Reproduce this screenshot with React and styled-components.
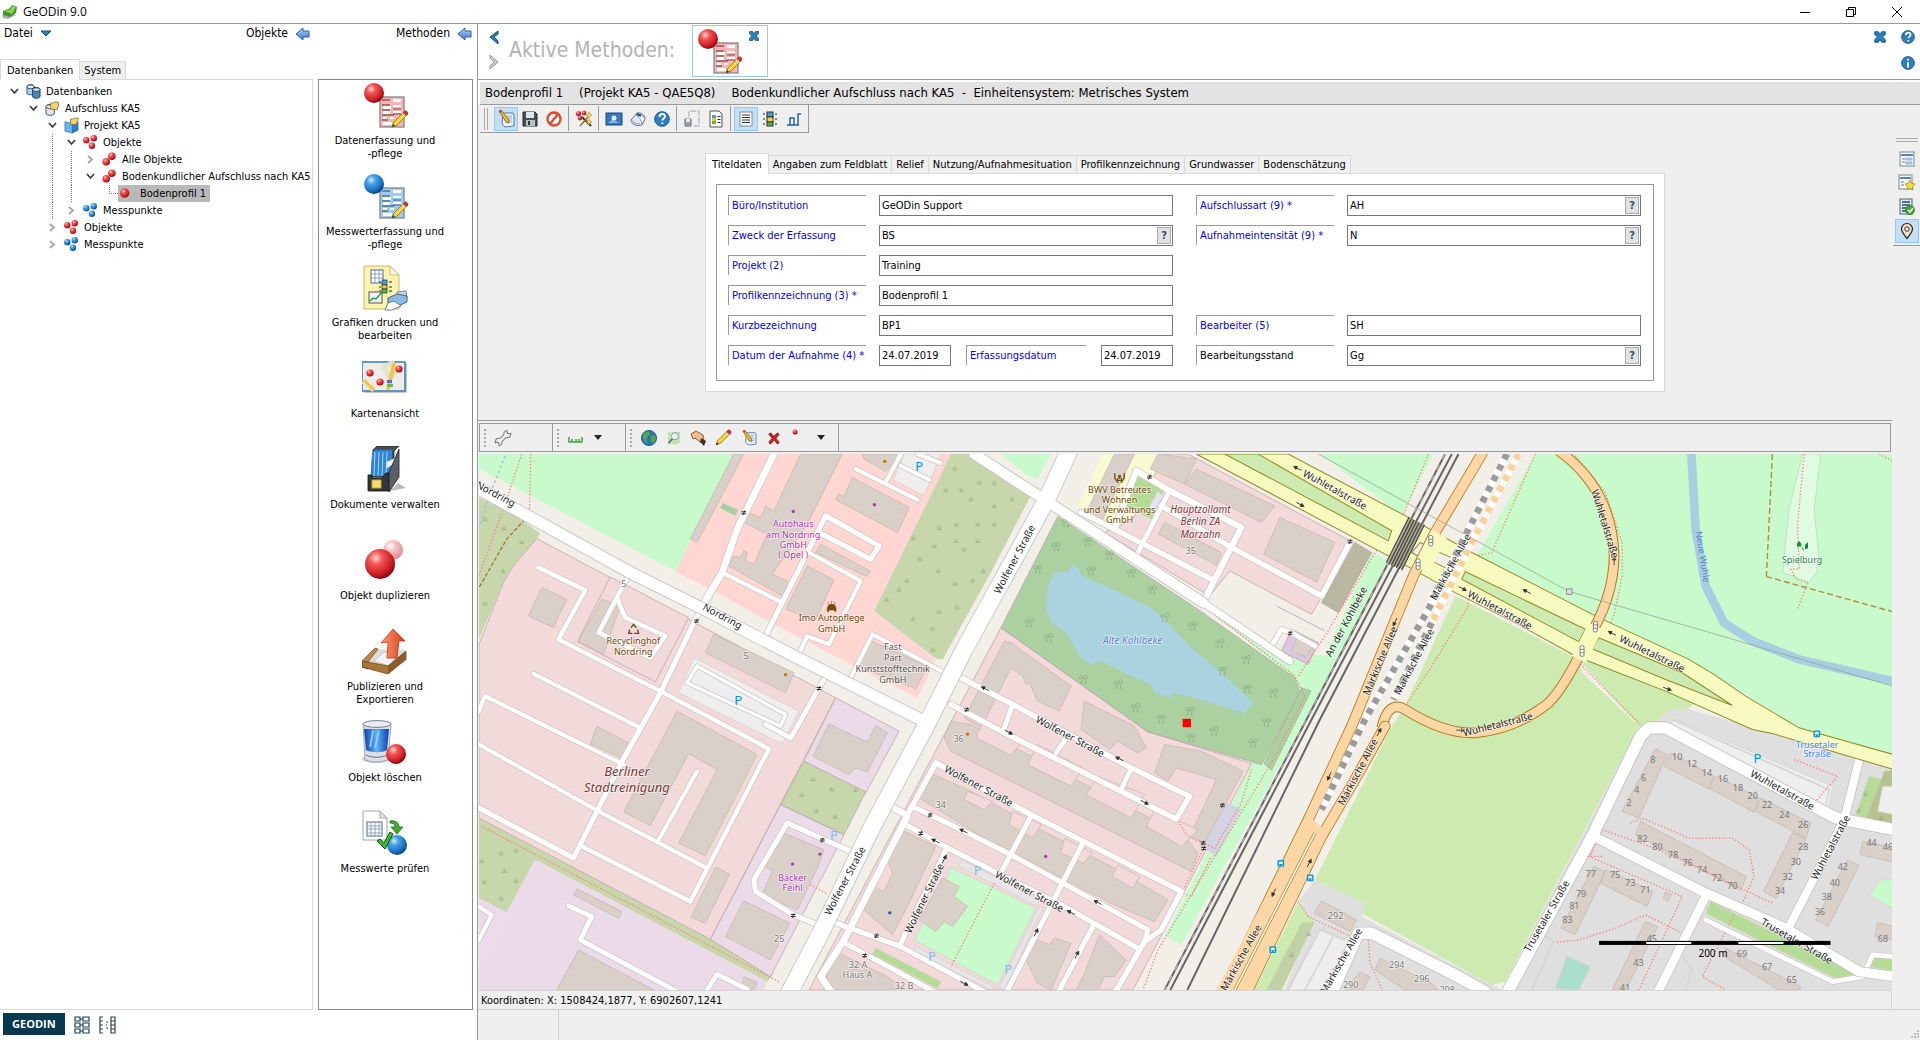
import React from 'react';
import styled, { createGlobalStyle } from 'styled-components';

const GlobalStyle = createGlobalStyle`
  * {
    box-sizing: border-box;
  }

  body {
    margin: 0;
    background: #fff;
    color: #000;
    font-family: Tahoma, 'DejaVu Sans Condensed', 'Noto Sans', sans-serif;
    font-size: 11px;
    line-height: 13px;
  }

  button, input {
    font: inherit;
    color: inherit;
    margin: 0;
    padding: 0;
  }

  button {
    border: 0;
    background: none;
  }

  svg {
    display: block;
    flex: none;
  }
`;

/* ---------- data ---------- */

const tree = [
  { label: 'Datenbanken', depth: 0, open: true, icon: 'databases' },
  { label: 'Aufschluss KA5', depth: 1, open: true, icon: 'database' },
  { label: 'Projekt KA5', depth: 2, open: true, icon: 'project' },
  { label: 'Objekte', depth: 3, open: true, icon: 'redThree' },
  { label: 'Alle Objekte', depth: 4, open: false, icon: 'redTwo' },
  { label: 'Bodenkundlicher Aufschluss nach KA5', depth: 4, open: true, icon: 'redTwo' },
  { label: 'Bodenprofil 1', depth: 5, leaf: true, icon: 'redOne' },
  { label: 'Messpunkte', depth: 3, open: false, icon: 'blueThree' },
  { label: 'Objekte', depth: 2, open: false, icon: 'redThree' },
  { label: 'Messpunkte', depth: 2, open: false, icon: 'blueThree' },
];

const methods = [
  { icon: 'formRed', lines: ['Datenerfassung und', '-pflege'] },
  { icon: 'formBlue', lines: ['Messwerterfassung und', '-pflege'] },
  { icon: 'print', lines: ['Grafiken drucken und', 'bearbeiten'] },
  { icon: 'map', lines: ['Kartenansicht'] },
  { icon: 'binder', lines: ['Dokumente verwalten'] },
  { icon: 'duplicate', lines: ['Objekt duplizieren'] },
  { icon: 'publish', lines: ['Publizieren und', 'Exportieren'] },
  { icon: 'trash', lines: ['Objekt löschen'] },
  { icon: 'check', lines: ['Messwerte prüfen'] },
];

const formTabs = [
  'Titeldaten',
  'Angaben zum Feldblatt',
  'Relief',
  'Nutzung/Aufnahmesituation',
  'Profilkennzeichnung',
  'Grundwasser',
  'Bodenschätzung',
];

const leftFields = [
  { id: 'buero', label: 'Büro/Institution', value: 'GeODin Support' },
  { id: 'zweck', label: 'Zweck der Erfassung', value: 'BS', help: true },
  { id: 'projekt', label: 'Projekt (2)', value: 'Training' },
  { id: 'profil', label: 'Profilkennzeichnung (3) *', value: 'Bodenprofil 1' },
  { id: 'kurz', label: 'Kurzbezeichnung', value: 'BP1' },
];

const rightFields = [
  { id: 'art', label: 'Aufschlussart (9) *', value: 'AH', help: true },
  { id: 'intensitaet', label: 'Aufnahmeintensität (9) *', value: 'N', help: true },
  null,
  null,
  { id: 'bearbeiter', label: 'Bearbeiter (5)', value: 'SH' },
];

/* ---------- icons ---------- */

const Gradients = () => (
  <HiddenSvg width="0" height="0" aria-hidden="true">
    <defs>
      <radialGradient id="ballRed" cx="0.36" cy="0.3" r="0.7">
        <stop offset="0" stopColor="#ffd9d4" />
        <stop offset="0.3" stopColor="#ef5a58" />
        <stop offset="0.75" stopColor="#d31f26" />
        <stop offset="1" stopColor="#8e0b12" />
      </radialGradient>
      <radialGradient id="ballBlue" cx="0.36" cy="0.3" r="0.7">
        <stop offset="0" stopColor="#d5ecff" />
        <stop offset="0.3" stopColor="#4aa3e8" />
        <stop offset="0.75" stopColor="#1b74c4" />
        <stop offset="1" stopColor="#0b4583" />
      </radialGradient>
      <radialGradient id="ballPale" cx="0.36" cy="0.3" r="0.7">
        <stop offset="0" stopColor="#fff" />
        <stop offset="0.4" stopColor="#f6bfc0" />
        <stop offset="1" stopColor="#e48e92" />
      </radialGradient>
      <linearGradient id="glass" x1="0" x2="1">
        <stop offset="0" stopColor="#0a3fb4" />
        <stop offset="0.5" stopColor="#5fb3ff" />
        <stop offset="1" stopColor="#0b3fae" />
      </linearGradient>
      <linearGradient id="arrowBlue" x1="0" x2="0" y1="0" y2="1">
        <stop offset="0" stopColor="#b5d6fb" />
        <stop offset="1" stopColor="#2f72d2" />
      </linearGradient>
      <linearGradient id="arrowRed" x1="0" x2="1">
        <stop offset="0" stopColor="#ff9c78" />
        <stop offset="1" stopColor="#d83b16" />
      </linearGradient>
    </defs>
  </HiddenSvg>
);

const Ball = ({ x, y, r, tone = 'Red' }) => (
  <circle cx={x} cy={y} r={r} fill={`url(#ball${tone})`} />
);

const Pencil = ({ x = 0, y = 0, s = 1 }) => (
  <g transform={`translate(${x} ${y}) scale(${s})`}>
    <path d="M0 16l2-5L11 2l3 3-9 9z" fill="#f6d63a" stroke="#8a6a10" strokeWidth="0.8" />
    <path d="M11 2l2-2c1-1 4 2 3 3l-2 2z" fill="#d8322c" stroke="#8d1a16" strokeWidth="0.6" />
    <path d="M10 3l3 3 1-1-3-3z" fill="#ddd" />
    <path d="M0 16l1-3 2 2z" fill="#333" />
  </g>
);

const FormSheet = ({ fill, line }) => (
  <g>
    <rect x="18" y="15" width="24" height="30" fill={fill} stroke="#8d8d8d" strokeWidth="1.4" />
    <path d="M20 18h8M20 23h8M20 28h8M20 33h12M20 38h6" stroke={line} strokeWidth="1" />
    <path d="M31 17h8v3h-8zM21 24h8v3h-8zM31 23h8v2h-8zM21 29h7v3h-7zM31 29h8v2h-8zM21 35h4v2h-4zM28 35h4v2h-4zM21 40h9v3h-9z" fill="#fff" />
    <path d="M31 27h8M31 32h8" stroke={line} strokeWidth="0.8" />
  </g>
);

const methodDrawings = {
  formRed: (
    <>
      <FormSheet fill="#f5b5b2" line="#5d2b2b" />
      <Ball x={12} y={11} r={10} />
      <Pencil x={30} y={29} />
    </>
  ),
  formBlue: (
    <>
      <FormSheet fill="#9fcdf0" line="#23425e" />
      <Ball x={12} y={11} r={10} tone="Blue" />
      <Pencil x={30} y={29} />
    </>
  ),
  print: (
    <>
      <path d="M2 2h26l9 9v34H2z" fill="#fbf3ae" stroke="#c8b96a" />
      <path d="M28 2v9h9z" fill="#fffbe0" stroke="#c8b96a" />
      <rect x="9" y="6" width="12" height="13" fill="#fff" stroke="#4b6b96" />
      <path d="M13 6v13M17 6v13M9 10h12M9 14h12" stroke="#6f8db5" strokeWidth="0.8" />
      <rect x="20" y="16" width="5" height="5" fill="#3ea0e0" stroke="#333" strokeWidth="0.7" />
      <rect x="20" y="21" width="5" height="4" fill="#f6c62f" stroke="#333" strokeWidth="0.7" />
      <rect x="20" y="25" width="5" height="4" fill="#4fc04c" stroke="#333" strokeWidth="0.7" />
      <path d="M17 18h2M17 23h2M17 27h2M27 18h3M27 23h3M27 27h3" stroke="#222" />
      <rect x="7" y="28" width="13" height="11" fill="#eef1f8" stroke="#555" />
      <path d="M8 37l3-3 3 1 6-7" fill="none" stroke="#2ba12e" strokeWidth="1.5" />
      <path d="M35 28l9-1 1 7-10 1z" fill="#ccd5e0" stroke="#7b8797" />
      <path d="M26 34l9-4 10 2v6l-9 4-10-3z" fill="#8ab9e4" stroke="#47658a" />
      <path d="M26 39l6-2 7 5-9 4h-7z" fill="#fff" stroke="#6c7787" />
    </>
  ),
  map: (
    <>
      <rect x="2" y="9" width="43" height="29" fill="#c9c9c9" />
      <rect x="0" y="7" width="43" height="29" fill="#eeece4" stroke="#3b86bd" strokeWidth="1.6" />
      <path d="M1 26l11 9M22 12l8-4 4 8-6 7z" fill="none" stroke="#dfe4cf" strokeWidth="5" />
      <path d="M2 25l10 10" stroke="#f3c34b" strokeWidth="3" />
      <path d="M32 8l-3 14-3 13" fill="none" stroke="#f3c34b" strokeWidth="4" />
      <rect x="25" y="25" width="5" height="3" fill="#5a68c8" />
      <rect x="25" y="29" width="6" height="3" fill="#68b64e" />
      <Ball x={8} y={18} r={3.6} />
      <Ball x={18} y={27} r={3.6} />
      <Ball x={37} y={14} r={3.6} />
    </>
  ),
  binder: (
    <>
      <path d="M28 45l16-3-8-5z" fill="#bbb" />
      <path d="M11 4l4-4h22l-5 5v26H9z" fill="#4a4e55" stroke="#22252a" strokeWidth="0.8" />
      <path d="M10 7l3-3h17v22l-4 4H9z" fill="#2c86d3" />
      <path d="M13 6l-1 24M17 6l-1 24M21 6l-1 24M25 6l-1 24" stroke="#a5d3f8" />
      <path d="M24 16l9-4v5l-9 6z" fill="#e9f0f6" stroke="#88a" strokeWidth="0.5" />
      <path d="M25 31l4-9 8-19v28l-10 15z" fill="#5b6067" stroke="#1d1f23" strokeWidth="0.8" />
      <path d="M6 29h4v3h10l4-5h3v18H6z" fill="#33373d" stroke="#111" strokeWidth="0.8" />
      <rect x="10" y="34" width="9" height="8" fill="#f5dd6c" stroke="#c5a92f" />
    </>
  ),
  duplicate: (
    <>
      <Ball x={31} y={13} r={10} tone="Pale" />
      <Ball x={18} y={27} r={15} />
    </>
  ),
  publish: (
    <>
      <path d="M25 46l20-14-3-4z" fill="#bbb" />
      <path d="M1 34L12 21l32 1-17 23z" fill="#ddd" />
      <path d="M12 33l10-9 14 2-9 12z" fill="#f2f2f2" stroke="#a7a7a7" strokeWidth="0.6" />
      <path d="M0 33L13 20l3 1L6 34v7l-6-2z" fill="#b98a4c" stroke="#70491b" strokeWidth="0.7" />
      <path d="M6 34l20 4 18-15v8L26 46 0 39v-6z" fill="#a87637" stroke="#5f3d14" strokeWidth="0.7" />
      <path d="M26 38v8l18-15v-8z" fill="#8b5c27" />
      <path d="M19 15L31 1l12 12h-6l-2 17H25l1-16z" fill="url(#arrowRed)" stroke="#a72c0d" strokeWidth="0.7" />
    </>
  ),
  trash: (
    <>
      <ellipse cx="14" cy="40" rx="14" ry="4" fill="#c9c9c9" />
      <path d="M1 5l2 35c4 4 19 4 23 0l3-35z" fill="#dcdfe3" stroke="#8f959c" strokeWidth="0.8" />
      <path d="M2 10l2 21c5 3 17 3 21 0l2-21z" fill="url(#glass)" />
      <path d="M11 12l-3 16M17 12l-4 17" stroke="#a5d5ff" strokeWidth="1.5" />
      <ellipse cx="15" cy="5" rx="14" ry="3.4" fill="#e9edf1" stroke="#7b8188" />
      <path d="M4 36c6 3 16 3 21 0" stroke="#6d737a" fill="none" />
      <Ball x={34} y={35} r={10} />
    </>
  ),
  check: (
    <>
      <path d="M1 1h17l7 7v22H1z" fill="#fff" stroke="#a3a3a3" />
      <path d="M18 1v7h7z" fill="#e5e5e5" stroke="#a3a3a3" />
      <rect x="5" y="12" width="15" height="14" fill="#fff" stroke="#51698f" />
      <path d="M9 12v14M13 12v14M17 12v14M5 16h15M5 19h15M5 23h15" stroke="#7f95b8" strokeWidth="0.8" />
      <path d="M28 11c6-1 9 2 9 6h4l-6 7-6-7h4c0-3-2-4-5-4z" fill="#3fae33" stroke="#1d6b18" strokeWidth="0.8" />
      <Ball x={35} y={35} r={10} tone="Blue" />
      <path d="M15 31l3-2 4 4 6-11 3 2-8 15z" fill="#45b535" stroke="#14520f" />
    </>
  ),
};

const MethodIcon = ({ name }) => (
  <svg width="46" height="48" viewBox="0 0 46 48" aria-hidden="true">{methodDrawings[name]}</svg>
);

const smallDrawings = {
  databases: (
    <>
      <path d="M1 3c0-3 8-3 8 0v7c0 2-8 2-8 0z" fill="#a9cdec" stroke="#1a2e42" strokeWidth="0.8" />
      <ellipse cx="5" cy="3" rx="4" ry="2" fill="#e4f1fc" stroke="#1a2e42" strokeWidth="0.8" />
      <path d="M7 6c0-3 8-3 8 0v7c0 3-8 3-8 0z" fill="#4a86bd" stroke="#10202f" strokeWidth="0.8" />
      <ellipse cx="11" cy="6" rx="4" ry="2" fill="#cfe4f7" stroke="#10202f" strokeWidth="0.8" />
    </>
  ),
  database: (
    <>
      <path d="M1 6c0-3 9-3 9 0v7c0 3-9 3-9 0z" fill="#d5e6f5" stroke="#1a2733" strokeWidth="0.8" />
      <ellipse cx="5.5" cy="6" rx="4.5" ry="2" fill="#f0f7fd" stroke="#1a2733" strokeWidth="0.8" />
      <path d="M6 2h3l1-1h4v2h1l-2 6H6z" fill="#f0cf7b" stroke="#8b6a1c" strokeWidth="0.8" />
    </>
  ),
  project: (
    <>
      <path d="M1 4l8 2v10l-8-2z" fill="#69b4ee" stroke="#1f67a8" strokeWidth="0.7" />
      <path d="M9 6l6-2v9l-6 3z" fill="#2c7fc7" stroke="#1f67a8" strokeWidth="0.7" />
      <path d="M7 1h3l1-1h4v2l-2 5H7z" fill="#f0cf7b" stroke="#8b6a1c" strokeWidth="0.8" />
    </>
  ),
  redThree: (<><Ball x={3.5} y={5.5} r={3.4} /><Ball x={11.5} y={3.5} r={3.4} /><Ball x={9.5} y={11.5} r={3.4} /></>),
  blueThree: (<><Ball x={3.5} y={5.5} r={3.4} tone="Blue" /><Ball x={11.5} y={3.5} r={3.4} tone="Blue" /><Ball x={9.5} y={11.5} r={3.4} tone="Blue" /></>),
  redTwo: (<><Ball x={10.5} y={4.5} r={4} /><Ball x={4.5} y={10.5} r={4} /></>),
  redOne: <Ball x={5} y={7.5} r={5} />,
  note: (
    <>
      <path d="M5 2h10l1 2v11l-9 1-3-3z" fill="#e9f0f7" stroke="#56789b" />
      <path d="M8 5h6M8 7h6M8 9h6M8 11h6" stroke="#86a6c6" strokeWidth="0.8" />
      <path d="M1 0l2-1 8 10v3l-3-1z" fill="#f3bc38" stroke="#7e5510" strokeWidth="0.8" />
      <path d="M1 0l2-1 1 2-2 1z" fill="#d23c32" />
    </>
  ),
  save: (
    <>
      <path d="M1 1h12l2 2v12H1z" fill="#4a4f57" stroke="#25282d" />
      <rect x="4" y="1" width="8" height="6" fill="#dfe6ee" />
      <rect x="4" y="9" width="9" height="6" fill="#b9c0c8" />
      <rect x="6" y="10" width="2" height="4" fill="#333" />
    </>
  ),
  forbid: (
    <>
      <circle cx="8" cy="8" r="6.5" fill="#fff" stroke="#e0492c" strokeWidth="2.3" />
      <path d="M12 3L4 13" stroke="#e0492c" strokeWidth="2.3" />
    </>
  ),
  wand: (
    <>
      <path d="M15 15L6 6" stroke="#38342e" strokeWidth="2" />
      <path d="M4 15L12 6" stroke="#9b6b30" strokeWidth="1.6" />
      <Ball x={2.5} y={2.5} r={2.6} />
      <Ball x={8} y={2} r={2.4} />
      <Ball x={4} y={7} r={2.4} />
      <path d="M13 1l1 2 2 1-2 1-1 2-1-2-2-1 2-1zM13 8l1 2 2 1-2 1-1 2-1-2-2-1 2-1z" fill="#f7dc3c" stroke="#9e850e" strokeWidth="0.5" />
    </>
  ),
  picture: (
    <>
      <rect x="0" y="2" width="16" height="12" fill="#3775bd" stroke="#1b4a85" />
      <path d="M2 12l5-4 6 4z" fill="#80b3e6" />
      <circle cx="8" cy="7" r="2.5" fill="#e4effb" />
    </>
  ),
  paint: (
    <>
      <path d="M1 9l6-7c4-1 8 2 8 6l-3 6c-6 2-11-1-11-5z" fill="#dfe8f2" stroke="#6b7785" />
      <path d="M6 4l5-1 4 5-3 5c-1-5-3-7-6-9z" fill="#fff" stroke="#6b7785" strokeWidth="0.8" />
      <path d="M7 3l4 2" stroke="#1c4f91" strokeWidth="2" />
      <path d="M2 10c2 2 5 3 8 3" stroke="#8b96a3" fill="none" />
    </>
  ),
  help: (
    <>
      <circle cx="8" cy="8" r="7.3" fill="#2c7fbe" stroke="#1a568a" />
      <path d="M5.5 6c0-4 5.5-4 5.5-.5 0 2-2.7 2-2.7 4M8.300 11.500v1.600" fill="none" stroke="#fff" strokeWidth="1.9" />
    </>
  ),
  info: (
    <>
      <circle cx="8" cy="8" r="7.3" fill="#2c7fbe" stroke="#1a568a" />
      <path d="M8 3v2M8 7v6" stroke="#fff" strokeWidth="2.2" />
    </>
  ),
  tray: (
    <>
      <path d="M5 6V0h10v15H9" fill="none" stroke="#a5a5a5" strokeDasharray="6 1.500" />
      <path d="M1 8h6v7H1z" fill="#9ba0a7" stroke="#6f747b" />
      <rect x="2" y="8" width="4" height="3" fill="#eee" />
    </>
  ),
  report: (
    <>
      <path d="M2 0h9l3 3v13H2z" fill="#fff" stroke="#555" />
      <rect x="4" y="4" width="4" height="3" fill="#3d9ae0" />
      <rect x="4" y="7" width="4" height="3" fill="#f3c42e" />
      <rect x="4" y="10" width="4" height="3" fill="#54b947" />
      <path d="M9.5 5.5h3M9.5 8.5h3M9.5 11.5h3" stroke="#222" />
    </>
  ),
  list: (
    <>
      <rect x="2" y="1" width="12" height="14" fill="#fff" stroke="#888" />
      <path d="M4 4h8M4 6.5h8M4 9h8M4 11.5h8" stroke="#333" />
    </>
  ),
  strata: (
    <>
      <rect x="5" y="1" width="6" height="5" fill="#3ea3dc" stroke="#333" />
      <rect x="5" y="6" width="6" height="5" fill="#f2d83a" stroke="#333" />
      <rect x="5" y="11" width="6" height="4" fill="#56b54a" stroke="#333" />
      <path d="M1 3h2M1 8h2M1 13h2M13 3h2M13 8h2M13 13h2" stroke="#222" strokeWidth="1.2" />
    </>
  ),
  curve: <path d="M1 14h12M4 14V7h4v7M12 14V3h3" fill="none" stroke="#24689a" strokeWidth="1.5" />,
  wrench: (
    <>
      <path d="M3 13L13 3" stroke="#666" strokeWidth="4.4" />
      <path d="M9 2l3-2v3l2 1 2-1-1 4-4 1-2-3zM7 14l-3 2v-3l-2-1-2 1 1-4 4-1 2 3z" fill="#eee" stroke="#666" strokeWidth="0.9" />
      <path d="M4 12l8-8" stroke="#eee" strokeWidth="2.6" />
    </>
  ),
  ruler: <path d="M1 7v5h13V7M4 9v3M8 9v3M11 9v3" fill="none" stroke="#41a33f" strokeWidth="1.5" />,
  globe: (
    <>
      <circle cx="8" cy="8" r="7.6" fill="#2674bd" stroke="#174a80" strokeWidth="0.8" />
      <path d="M2 4l5-3 2 3-4 5 2 5-4-3zM10 6l4-1 1 4-3 5-2-3z" fill="#57a93f" />
    </>
  ),
  mapZoom: (
    <>
      <path d="M1 1h14v12l-4 2H1z" fill="#c4e0b0" />
      <path d="M1 6h8M5 2v12" stroke="#f0f4e6" />
      <circle cx="9" cy="6" r="4" fill="#e6f3f9" stroke="#80919a" />
      <path d="M6 9l-4 5" stroke="#5d6d74" strokeWidth="2" />
    </>
  ),
  hand: (
    <>
      <path d="M0 4l5-3 7 4 1 6-4 1-5-4-2 1z" fill="#eebd8f" stroke="#8d5d36" />
      <path d="M10 8l5 3-2 5-4-4z" fill="#3b332e" />
    </>
  ),
  pencil: <Pencil />,
  cross: <path d="M2 4l2-2 4 4 4-4 2 2-4 4 4 5-2 2-4-5-4 5-2-2 4-5z" fill="#d11d1d" stroke="#7d0909" strokeWidth="0.8" />,
  dot: <Ball x={4} y={2} r={2.5} />,
  dataForm: (
    <>
      <rect x="1" y="1" width="14" height="14" fill="#f4f7fa" stroke="#7c8792" />
      <path d="M2 4h12" stroke="#5b82b1" strokeWidth="2" />
      <path d="M3 8h3M3 11h3" stroke="#777" />
      <path d="M7 7h6v2H7zM7 11h6v2H7z" fill="#b9d4ec" stroke="#7999b8" strokeWidth="0.6" />
    </>
  ),
  dataStar: (
    <>
      <rect x="0" y="0" width="13" height="14" fill="#f4f7fa" stroke="#7c8792" />
      <path d="M1 3h11" stroke="#5b82b1" strokeWidth="2" />
      <path d="M2 7h3M2 10h3" stroke="#777" />
      <path d="M11 5l1.6 3.400 3.400.6-2.500 2.500.5 3.500-3-1.800-3 1.800.5-3.500L6 9l3.400-.6z" fill="#f8dd33" stroke="#94800c" strokeWidth="0.7" />
    </>
  ),
  dataOk: (
    <>
      <rect x="1" y="0" width="12" height="15" fill="#d8eaf8" stroke="#4e6273" />
      <path d="M3 3h8M3 6h8M3 9h5M3 12h5" stroke="#2d4963" strokeWidth="1.5" />
      <circle cx="11" cy="11" r="4.6" fill="#43a934" stroke="#216b18" strokeWidth="0.6" />
      <path d="M9 11l2 2 3-4" fill="none" stroke="#fff" strokeWidth="1.5" />
    </>
  ),
  pin: (
    <>
      <path d="M8 15.500C5 11 2.500 9 2.500 6a5.500 5.500 0 0 1 11 0c0 3-2.500 5-5.500 9.500z" fill="#f6dfbd" stroke="#222" strokeWidth="1.2" />
      <circle cx="8" cy="6" r="2.2" fill="#fff" stroke="#222" />
    </>
  ),
  close: <path d="M2 2h4l2 3 2-3h4v3l-3 3 3 3v3h-4l-2-3-2 3H2v-3l3-3-3-3z" fill="#2880bf" stroke="#13496f" />,
  blocksA: (
    <path
      d="M1 1h5v4H1zM1 7h5v4H1zM1 13h5v4H1zM9 1h6v4H9zM9 7h6v4H9zM9 13h6v4H9zM6 3h3M6 9h3M6 15h3"
      fill="none"
      stroke="#1e3d57"
      strokeWidth="1.2"
    />
  ),
  blocksB: (
    <path
      d="M4 1H1v16h3M1 5h3M1 9h3M1 13h3M12 1h4v16h-4zM12 5h4M12 9h4M12 13h4M7 6h2M7 9h1M7 12h2"
      fill="none"
      stroke="#33414d"
      strokeWidth="1.2"
    />
  ),
};

const Icon = ({ name, size = 16 }) => (
  <svg width={size} height={size} viewBox="0 0 16 16" overflow="visible" aria-hidden="true">
    {smallDrawings[name]}
  </svg>
);

const Caret = () => (
  <svg width="8" height="5" viewBox="0 0 8 5" aria-hidden="true"><path d="M0 0h8L4 5z" fill="#222" /></svg>
);

const BackArrow = () => (
  <svg width="15" height="14" viewBox="0 0 15 14" aria-hidden="true">
    <path d="M1 7l7-6v3h6v6H8v3z" fill="url(#arrowBlue)" stroke="#2c5ea8" />
  </svg>
);

const Chevron = ({ open }) => (
  <svg width="9" height="9" viewBox="0 0 9 9" aria-hidden="true">
    {open
      ? <path d="M1 2l3.500 4L8 2" fill="none" stroke="#404040" strokeWidth="1.8" />
      : <path d="M2 1l4 3.500L2 8" fill="none" stroke="#a6a6a6" strokeWidth="1.8" />}
  </svg>
);

/* ---------- map ---------- */

// Map units: three per screen pixel.
const areas = [
  ['#c8facc', '27,135 790,135 615,485 27,180'],
  ['#c8d7ab', '27,265 130,315 210,372 200,390 130,470 100,520 27,690'],
  ['#ffd6d1', '615,487 790,135 1440,135 1210,605 1395,750 1340,865 1150,770 920,650 720,540'],
  ['#c8d7ab', '1440,135 1500,135 1680,258 1560,490 1415,750 1395,748 1210,605'],
  ['#c8facc', '1590,135 1740,135 1700,210 1670,200'],
  ['#f8fad2', '1895,135 2085,135 1975,330 1940,380 1820,290'],
  ['#c8facc', '2545,135 2885,135 2790,320'],
  ['#c8facc', '3190,135 4266,135 4266,1035 3980,955 3725,795 3380,625 3015,440 3060,360'],
  ['#cdebb0', '3320,750 3340,720 3700,850 3640,905 3500,950'],
  ['#e0dfdf', '3500,950 3560,930 3590,900 3650,900 3760,930 4266,1070 4266,1740 3090,1740'],
  ['#cdebb0', '2950,560 3320,750 3330,790 3500,950 3100,1715 3060,1725 2670,1510 2680,1480 2530,1410 2760,950 2800,890'],
  ['#e0dfdf', '2530,1410 2683,1480 2670,1520 3090,1740 2440,1740 2520,1530 2480,1475'],
  ['#cdebb0', '2480,1475 2530,1535 2430,1740 2350,1740'],
  ['#c2d0a6', '2490,1540 2530,1535 2430,1740 2385,1740'],
  ['#c8d7ab', '27,1225 720,1588 910,1690 890,1715 195,1350 110,1508 27,1465'],
  ['#ebdbe8', '195,1350 890,1715 880,1740 27,1740 27,1660 110,1508'],
  ['#ebdbe8', '27,1465 110,1508 27,1660'],
  ['#c8facc', '2700,430 2750,455 2485,960 2130,1605 2080,1580 2340,1065 2480,850 2460,800 2195,590 2400,715 2560,740'],
];

const parcels = [
  ['#f2dada', '27,705 100,520 130,470 200,388 1095,865 720,1588 27,1225'],
  ['#f2dada', '420,503 655,625 555,817 322,697'],
  ['#ebdbe8', '1095,865 1285,965 1185,1150 1000,1055'],
  ['#c8d7ab', '1000,1055 1185,1147 1120,1275 930,1185'],
  ['#ebdbe8', '930,1185 1120,1275 900,1700 720,1588'],
  ['#f2dada', '2080,135 2150,135 2645,400 2520,615 2275,485 2215,560 1900,370 1985,330'],
  ['#b9b79f', '2650,400 2700,430 2600,610 2550,580'],
  ['#f2dada', '1590,655 2030,967 2340,1062 1985,1740 1015,1740'],
  ['#abd1a0', '1760,322 2180,600 2470,805 2485,850 2370,1065 2030,967 1590,655'],
  ['#abd1a0', '2490,835 2518,845 2400,1082 2378,1062'],
  ['#ddc6e2', '2460,660 2540,700 2510,765 2430,725'],
];

const lots = [
  ['#eeeeee', '670,745 985,905 935,1003 625,850'],
  ['#eeeeee', '1300,135 1410,135 1360,260 1268,212'],
  ['#a5d09d', '757,282 802,302 795,320 750,297'],
  ['#b5dc94', '1995,200 2080,240 2040,330 1960,290'],
  ['#e6e3ee', '2060,245 2075,262 2045,310 2030,300'],
  ['#d5d2e3', '2260,1178 2308,1200 2235,1338 2190,1310'],
  ['#c8facc', '1440,1373 1695,1495 1580,1725 1330,1590 1420,1420'],
  ['#e6e6ea', '1470,1350 1710,1470 1695,1488 1465,1370'],
  ['#e6e6ea', '1705,1490 1715,1495 1600,1740 1585,1730'],
  ['#e6e6ea', '1335,1610 1570,1730 1560,1740 1330,1625'],
  ['#b5dc94', '1215,1615 1410,1715 1400,1735 1205,1632'],
  ['#b5dc94', '1085,1670 1115,1690 1090,1728 1068,1715'],
  ['#eeeeee', '3610,930 4080,1130 4070,1195 3580,950'],
  ['#eeeeee', '2540,1555 2650,1600 2580,1740 2450,1740'],
  ['#b5dc94', '3715,1475 4150,1690 4100,1710 3700,1510'],
  ['#b5dc94', '4200,1640 4266,1650 4266,1685 4195,1670'],
  ['#aae0cb', '3285,1640 3355,1670 3320,1740 3250,1735'],
  ['#c8facc', '4225,1410 4266,1410 4266,1500 4190,1455'],
  ['#b5dc94', '4190,1100 4230,1110 4190,1225 4150,1215'],
  ['#b6c38f', '4235,1085 4266,1080 4266,1250 4180,1225'],
  ['#eeeeee', '4230,1130 4266,1130 4266,1215 4215,1205'],
];

const buildings = [
  '790,135 820,135 680,400 660,388',
  '990,135 1115,135 1010,345 905,495 960,520 935,560 775,470 790,440 810,445 820,425 830,430 825,455 850,465 890,375 820,340 835,312 870,325 885,292 910,305',
  '1145,205 1315,295 1280,370 1110,280 1095,272 1105,255 1120,262',
  '1175,135 1295,135 1245,187 1180,150',
  '1050,405 1198,485 1188,502 1035,430',
  '1010,470 1090,512 1035,632 945,600',
  '1190,690 1370,770 1335,838 1160,770',
  '215,535 290,570 250,655 175,620',
  '395,570 450,590 400,735 325,695',
  '730,675 970,790 945,850 705,730',
  '620,905 860,1035 705,1338 625,1300 740,1080 655,1032 540,1247 460,1207',
  '380,950 475,1000 455,1045 360,1003',
  '1075,943 1190,998 1215,948 1250,970 1190,1087 1155,1075 1135,1095 1027,1040',
  '940,1270 1060,1320 1045,1365 980,1500 875,1455 905,1385 885,1370',
  '820,1473 957,1540 900,1650 765,1580',
  '735,1372 777,1393 705,1540 662,1522',
  '320,1437 455,1505 445,1525 310,1455',
  '325,1620 550,1740 260,1740',
  '1930,135 1990,135 1890,340 1845,310',
  '2060,135 2175,150 2140,225 2037,180',
  '2175,180 2410,290 2370,340 2140,225',
  '2425,325 2590,400 2535,518 2377,435',
  '2080,340 2250,430 2235,468 2062,375',
  '2475,685 2525,705 2505,745 2460,725',
  '1600,695 1620,700 1800,830 1765,905 1700,875 1675,820 1665,825 1655,800 1620,775 1530,955 1480,925',
  '1840,875 1990,950 2025,1015 2000,1030 1940,995 1915,1020 1830,960',
  '1440,935 1500,945 2140,1280 2180,1330 2160,1385 1440,1025 1420,985',
  '2080,1005 2190,1025 2315,1085 2200,1300 2155,1280 2235,1110 2115,1075 2090,1115 2050,1090',
  '1390,1095 1500,1145 1690,1250 1920,1370 2090,1470 2050,1535 1940,1490 1840,1440 1690,1360 1530,1280 1345,1165',
  '1290,1260 1395,1310 1310,1490 1265,1575 1180,1500 1210,1430 1240,1445 1265,1390 1250,1350',
  '1415,1405 1465,1430 1450,1460 1490,1490 1445,1550 1420,1535 1395,1565 1345,1530',
  '1095,1625 1250,1700 1300,1740 1060,1740 1075,1660',
  '1750,1585 1800,1600 1740,1740 1700,1720 1655,1630 1690,1585 1735,1605',
  '1885,1575 1965,1650 1930,1700 1900,1700 1880,1740 1815,1740 1840,1690',
  '2550,1473 2655,1530 2635,1565 2528,1510',
  '2725,1645 2880,1720 2900,1740 2800,1740 2710,1680',
  '2665,1685 2695,1700 2675,1740 2620,1740',
  '3550,1018 3585,1035 3500,1225 3450,1205',
  '3595,1030 3725,1100 3710,1138 3575,1070',
  '3730,1100 3860,1165 3845,1208 3710,1135',
  '3865,1165 4015,1240 4000,1285 3850,1205',
  '3960,1270 4002,1285 3910,1465 3873,1445',
  '3505,1235 3822,1400 3805,1442 3490,1275',
  '3365,1370 3400,1385 3310,1573 3267,1555',
  '3400,1380 3542,1445 3525,1490 3385,1420',
  '3520,1535 3557,1550 3460,1740 3420,1740',
  '4125,1350 4160,1367 4067,1550 4030,1530',
  '4170,1295 4266,1315 4266,1358 4163,1335',
  '4215,1538 4266,1550 4266,1590 4207,1580',
  '3760,1615 3985,1730 3980,1740 3920,1740 3755,1640',
  '3580,1447 3598,1455 3588,1473 3573,1465',
  '820,1700 860,1718 850,1740 815,1730',
];

const courtyards = [
  '1535,940 1655,995 1620,1037 1515,985',
  '1700,1005 1835,1075 1800,1130 1670,1065',
  '1880,1100 2020,1155 1980,1225 1845,1155',
  '2050,1200 2180,1260 2130,1310 2025,1250',
  '1490,1145 1565,1175 1540,1200 1480,1170',
  '1625,1205 1710,1245 1685,1285 1615,1245',
  '1780,1285 1865,1330 1835,1360 1770,1330',
  '1940,1365 2005,1400 1985,1435 1923,1400',
];

// [width, points]
const serviceRoads = [
  [13, '205,475 345,543 265,690 570,845 895,1018 660,1475 335,1310'],
  [13, '480,490 440,565 385,670 540,745 585,680 465,625 440,565'],
  [15, '690,600 570,850 450,1065 310,1345 27,1195'],
  [12, '190,793 510,955'],
  [12, '27,905 45,860 460,1065'],
  [12, '27,1005 385,1205 710,1375'],
  [12, '565,1290 680,1085'],
  [20, '910,135 800,360 755,490 690,600'],
  [12, '755,490 935,580'],
  [15, '890,670 980,490 1065,320 1225,410 1200,450 1045,370'],
  [12, '1015,430 1170,515 1075,705 1010,680 985,735'],
  [12, '1155,180 1340,272'],
  [12, '1245,220 1290,135'],
  [12, '1290,170 1375,212'],
  [12, '1340,135 1410,162'],
  [12, '1140,805 1205,675 1440,800'],
  [10, '680,770 945,915 930,950 650,820 680,770'],
  [14, '1065,800 975,960 960,985 885,945'],
  [14, '295,1488 365,1520 330,1590 630,1750'],
  [14, '710,1740 740,1693 830,1738'],
  [12, '27,1490 65,1515 27,1590'],
  [15, '1140,1325 950,1240 850,1410 855,1445 960,1510 1040,1545'],
  [16, '1440,885 1600,970 2115,1228 2155,1160 1980,1075 1625,885 1460,800'],
  [14, '1625,885 1600,955'],
  [14, '1790,980 1755,1030'],
  [14, '1980,1075 1950,1140'],
  [16, '1310,1215 1395,1060 1440,1085 1680,1215 2130,1445 2070,1560 2020,1595 1930,1750'],
  [15, '1335,1195 1440,1245 1620,1335 2030,1560 2020,1595'],
  [15, '1305,1245 1440,1320 1780,1490 2000,1615'],
  [20, '1250,1185 1310,1218 1120,1590 1050,1700 1085,1750'],
  [15, '1070,1530 1290,1610 1540,1745'],
  [15, '1115,1595 1390,1745'],
  [15, '1425,1320 1290,1600'],
  [15, '1680,1220 1595,1380'],
  [15, '1835,1300 1605,1750'],
  [15, '1865,1550 1760,1750'],
  [16, '1830,310 1930,360 2220,510'],
  [18, '1930,360 1995,185 2095,245 2310,355 2195,580'],
  [14, '2095,245 1995,440'],
  [16, '2070,290 2280,415 2550,560 2635,400'],
  [14, '2400,710 2430,660 2460,670 2530,710'],
  [14, '3700,1530 4080,1715 4170,1700 4200,1635 4266,1640'],
];

const streets = [
  [34, '27,240 480,490 700,600 980,745 1370,940'],
  [50, '1790,135 1725,275 1480,720 1370,940 1200,1260 1050,1570 950,1760'],
  [30, '1510,135 1725,275 2195,580'],
  [20, '2195,580 2455,755'],
  [34, '3110,1740 3360,1280 3505,980 3530,955 3580,955 4090,1225 4266,1260'],
  [24, '4160,1050 4115,1230 3945,1560'],
  [28, '3365,1280 3700,1450 3940,1555 4160,1685 4266,1700'],
  [26, '3700,1460 3560,1740'],
  [34, '2580,1750 2660,1570 2700,1570 2940,1690 3040,1745'],
];

const primary = [
  [28, '3030,135 2890,370 2825,500 2640,950 2510,1230 2255,1750'],
  [28, '2740,950 2650,1110 2550,1280 2325,1750'],
];

const rails = [
  '2920,135 2505,930 2080,1740',
  '2940,135 2520,930 2097,1740',
  '2960,135 2545,930 2148,1740',
];

const footways = [
  '155,135 110,270 27,500',
  '182,135 178,300',
  '35,1250 930,1718',
  '1018,1425 1070,1452',
  '2195,590 2470,800 2500,860 2400,1060 2060,1620 2015,1740',
  '2870,135 2790,330 2710,430 2560,680 2480,800',
  '2120,1235 2150,1280 2230,1315 2310,1180 2340,1080',
  '2190,1330 2130,1450 2160,1460 2220,1340',
  '3190,135 3060,430 3015,440',
  '2985,520 2990,590 2880,770 2800,890',
  '3310,140 3400,250 3450,400 3450,500 3425,620 3380,720',
  '3325,765 3510,950',
  '3995,135 3975,350 3980,480 3955,480 3970,510 4005,520 3975,600',
  '3965,1050 4095,1100 4025,1180',
  '3350,1340 3390,1260 3560,1320 3900,1480',
  '3390,1340 3355,1340 3370,1300',
  '3475,1240 3510,1225 3650,1285 3780,1285 3830,1320 3845,1400 3810,1480',
  '3350,1340 3630,1460 3500,1740',
  '3255,1597 3320,1590 3430,1555 3520,1515 3630,1570',
  '3785,1515 3690,1700 3760,1740',
  '2480,1475 2510,1520 2660,1590',
  '2690,1590 2695,1660 2730,1735',
  '1570,1420 1440,1670',
  '4220,135 4266,160',
];

const trees = [
  [1785, 340], [1755, 412], [1700, 480], [1850, 398], [1915, 438], [1860, 485], [1980, 492], [2043, 542],
  [2080, 625], [2163, 650], [2245, 702], [2325, 750], [1675, 640], [1732, 685], [2253, 785], [2327, 838],
  [2405, 850], [1837, 810], [1942, 825], [2155, 905], [2070, 928], [1993, 895], [2385, 938], [2160, 985],
  [2228, 965], [2345, 1000],
];

const tufts = [
  [45, 330], [102, 357], [155, 398], [100, 485], [45, 582], [1452, 178], [1425, 244], [1470, 242],
  [1457, 346], [1405, 356], [1327, 386], [1390, 410], [1480, 420], [1347, 448], [1402, 485], [1308, 514],
  [1285, 541], [1453, 523], [1248, 570], [1405, 607], [1385, 657], [1326, 628], [1387, 720], [1525, 220],
  [1570, 222], [1500, 270], [1570, 290], [1623, 270], [1520, 345], [1570, 345],
  [1455, 395], [1520, 395], [1537, 485], [1505, 513], [1458, 594],
  [1027, 1108], [1083, 1138], [1155, 1140], [993, 1155], [1037, 1203], [1093, 1220],
  [35, 1353], [93, 1330], [138, 1322], [103, 1383], [43, 1417], [138, 1412], [93, 1465],
  [2512, 1572], [2460, 1635], [4178, 1152], [4158, 1202], [4225, 1225],
];

const gates = [
  [820, 311], [678, 635], [1045, 837], [1487, 901], [2035, 204], [2635, 398], [2456, 672], [1055, 1291],
  [968, 1517], [1217, 1578], [1182, 1637], [1378, 1216], [1350, 1271], [2253, 1187], [2195, 1300], [2197, 1316],
];

const oneWay = [
  [1543, 838, 207], [1613, 968, 27], [1945, 1048, 207], [2020, 1178, 27], [1478, 1264, 207], [1394, 1294, 207],
  [1880, 1478, 207], [1800, 1508, 207], [1420, 1348, -63], [1695, 1568, -63], [1817, 1635, -63],
  [2478, 178, 207], [2486, 286, 27], [2770, 638, 115], [2573, 1100, 115], [2407, 1448, 115], [2722, 968, -63],
  [2513, 1360, -63], [3165, 547, 207], [2972, 538, 27], [3420, 672, 207], [3585, 838, 20], [2966, 962, 0],
  [3426, 455, -90], [1480, 1720, 27],
];

const pois = [
  ['#ac39ac', 968, 307], ['#ac39ac', 1211, 287], ['#c77400', 1242, 157], ['#c77400', 945, 796],
  ['#c77400', 1490, 974], ['#ac39ac', 966, 1363], ['#ac39ac', 1048, 1333], ['#ac39ac', 1724, 1340], ['#345aa8', 1257, 1509],
];

const parkingSigns = [
  ['#0092da', 1345, 187], ['#0092da', 803, 887], ['#0092da', 3855, 1060],
  ['#7fbfe4', 1090, 1290], ['#7fbfe4', 1383, 1652], ['#7fbfe4', 1520, 1395], ['#7fbfe4', 1612, 1693],
];

const streetLabels = [
  ['Nordring', 72, 264, 28], ['Nordring', 751, 630, 28],
  ['Wolfener Straße', 1640, 455, -62], ['Wolfener Straße', 1132, 1418, -62], ['Wolfener Straße', 1370, 1470, -64],
  ['Wolfener Straße', 1792, 990, 28], ['Wolfener Straße', 1518, 1138, 28], ['Wolfener Straße', 1670, 1454, 28],
  ['Wuhletalstraße', 2585, 251, 29], ['Wuhletalstraße', 3079, 611, 28], ['Wuhletalstraße', 3535, 742, 26],
  ['Wuhletalstraße', 3389, 347, 73], ['Wuhletalstraße', 3080, 955, -14], ['Wuhletalstraße', 3925, 1150, 29],
  ['Wuhletalstraße', 4083, 1318, -62], ['Trusetaler Straße', 3233, 1524, -60], ['Trusetaler Straße', 3968, 1603, 30],
  ['Märkische Allee', 2735, 758, -67], ['Märkische Allee', 2836, 762, -62], ['Märkische Allee', 2945, 478, -61],
  ['Märkische Allee', 2668, 1092, -62], ['Märkische Allee', 2318, 1648, -61], ['Märkische Allee', 2618, 1658, -60],
  ['An der Kohlbeke', 2633, 642, -62],
];

// [text, x, y, colour, size]
const placeLabels = [
  ['Autohaus', 968, 355, '#ac39ac', 27], ['am Nordring', 968, 386, '#ac39ac', 27], ['GmbH', 968, 416, '#ac39ac', 27],
  ['( Opel )', 968, 447, '#ac39ac', 27],
  ['Imo Autopflege', 1083, 636, '#734a08', 27], ['GmbH', 1083, 667, '#734a08', 27],
  ['Recyclinghof', 489, 705, '#734a08', 27], ['Nordring', 489, 736, '#734a08', 27],
  ['Fast', 1266, 722, '#555', 27], ['Part', 1266, 755, '#555', 27], ['Kunststofftechnik', 1266, 789, '#555', 27],
  ['GmbH', 1266, 822, '#555', 27],
  ['BWV Betreutes', 1945, 252, '#734a08', 27], ['Wohnen', 1945, 282, '#734a08', 27],
  ['und Verwaltungs', 1945, 313, '#734a08', 27], ['GmbH', 1945, 343, '#734a08', 27],
  ['Spielburg', 3989, 461, '#2f7d4c', 27],
  ['Bäcker', 966, 1413, '#ac39ac', 27], ['Feihl', 966, 1443, '#ac39ac', 27],
  ['Trusetaler', 4034, 1014, '#3d85f0', 27], ['Straße', 4034, 1043, '#3d85f0', 27],
  ['5', 461, 533, '#777', 27], ['5', 827, 750, '#777', 27], ['35', 2158, 434, '#777', 27],
  ['25', 926, 1595, '#777', 27], ['32 A', 1162, 1673, '#777', 27], ['Haus A', 1160, 1705, '#777', 27],
  ['32 B', 1300, 1736, '#777', 27], ['34', 1410, 1196, '#777', 27], ['36', 1463, 996, '#777', 27],
  ['292', 2592, 1528, '#777', 27], ['294', 2775, 1675, '#777', 27], ['296', 2850, 1715, '#777', 27],
  ['290', 2637, 1734, '#777', 27], ['298', 2926, 1749, '#777', 27],
];

const houseNumbers = [
  [8, 3542, 1061], [6, 3514, 1114], [4, 3494, 1151], [2, 3471, 1190], [10, 3615, 1050], [12, 3659, 1073],
  [14, 3704, 1098], [16, 3752, 1118], [18, 3797, 1143], [20, 3841, 1167], [22, 3884, 1196], [24, 3936, 1224],
  [26, 3992, 1254], [28, 3992, 1320], [30, 3970, 1365], [32, 3946, 1410], [34, 3923, 1454], [82, 3511, 1296],
  [80, 3556, 1320], [78, 3602, 1344], [76, 3646, 1368], [74, 3690, 1390], [72, 3734, 1414], [70, 3780, 1438],
  [77, 3356, 1402], [75, 3429, 1405], [73, 3474, 1428], [71, 3520, 1450], [79, 3327, 1461], [81, 3307, 1497],
  [83, 3286, 1539], [45, 3539, 1595], [43, 3499, 1669], [41, 3459, 1744], [69, 3809, 1642], [67, 3884, 1680],
  [65, 3958, 1719], [42, 4111, 1382], [40, 4087, 1428], [38, 4063, 1472], [36, 4042, 1516], [44, 4197, 1310],
  [46, 4246, 1320], [68, 4231, 1596],
];

const italicLabels = [
  ['Hauptzollamt', 2187, 313, '#7d3a3a', 30], ['Berlin ZA', 2187, 349, '#7d3a3a', 30], ['Marzahn', 2187, 386, '#7d3a3a', 30],
  ['Alte Kohlbeke', 1984, 703, '#5a84cc', 30],
  ['Berliner', 470, 1099, '#7d3a3a', 39], ['Stadtreinigung', 470, 1146, '#7d3a3a', 39],
];

const busStops = [[2428, 1362], [2516, 1405], [2404, 1620], [4033, 974]];
const signals = [[2877, 395], [2839, 465], [3370, 652], [3330, 725]];

const loopRoad = 'M2730 955 Q2750 870 2800 900 Q2920 975 3010 970 Q3130 960 3230 880 Q3280 830 3340 700 Q3425 570 3426 440 Q3420 240 3260 125';
const lake = 'M1805 467l20 13 5 18 50 22 150 70 50 40 80 85 80 65 105 98-25 34-160-50-65-12 10 18-55-18-10-25-70-30-80-40-30 10-35-25-40-70-45-30-15-40 5-70 20-38 40-7z';

const Roads = ({ items, casing, fill }) => (
  <g fill="none" strokeLinecap="round" strokeLinejoin="round">
    {items.map(([w, p]) => <polyline key={`c${p}`} points={p} stroke={casing} strokeWidth={w + 5} />)}
    {items.map(([w, p]) => <polyline key={p} points={p} stroke={fill} strokeWidth={w} />)}
  </g>
);

const Polygons = ({ items, stroke = 'none' }) => (
  <g stroke={stroke} strokeWidth="2">
    {items.map(([fill, p]) => <polygon key={p} points={p} fill={fill} />)}
  </g>
);

const CityMap = () => (
  <MapSvg viewBox="27 135 4239 1605" preserveAspectRatio="xMinYMin slice" role="img" aria-label="Karte">
    <rect x="27" y="135" width="4239" height="1605" fill="#f2efe9" />
    <Polygons items={areas} />
    <Polygons items={parcels} stroke="#b39c9c" />
    <Polygons items={lots} stroke="#d2cfc6" />
    <path d={lake} fill="#aad3df" />
    <polygon points="3990,135 4045,135 4025,300 4040,450 4032,490 4010,520 3975,505 3932,490 3935,440 3950,300" fill="#dffbe2" stroke="#a8dbb0" strokeWidth="2" />
    <g fill="#d9d0c9" stroke="#c0b3a8" strokeWidth="2">
      {buildings.map((p) => <polygon key={p} points={p} />)}
    </g>
    <g fill="#f2dada" stroke="#c0b3a8" strokeWidth="2">
      {courtyards.map((p) => <polygon key={p} points={p} />)}
    </g>
    <polyline points="3657,130 3670,360 3700,530 3755,640 3840,695 3980,750 4270,817" fill="none" stroke="#a8cfe0" strokeWidth="26" />

    <g fill="none" stroke="#7d9160" strokeWidth="2" opacity="0.6">
      {tufts.map(([x, y]) => <path key={`${x}-${y}`} d={`M${x - 8} ${y + 5}h16M${x} ${y + 5}v-12M${x} ${y + 4}l-7-7M${x} ${y + 4}l7-7`} />)}
    </g>
    <g fill="none" stroke="#84a87c" strokeWidth="2">
      {trees.map(([x, y]) => (
        <path key={`${x}-${y}`} d={`M${x - 6} ${y + 11}v-9M${x + 6} ${y + 12}v-12M${x - 12} ${y - 2}a6 6 0 1 1 11 1zM${x + 1} ${y - 3}a6 7 0 1 1 11 0zM${x - 9} ${y + 11}h6M${x + 3} ${y + 12}h6`} />
      ))}
    </g>
    <g fill="none" stroke="#fa8072" strokeWidth="4" strokeDasharray="4 6">
      {footways.map((p) => <polyline key={p} points={p} />)}
    </g>
    <polyline points="105,140 60,255 27,355" fill="none" stroke="#92c3ea" strokeWidth="4" strokeDasharray="8 8" />
    <polyline points="165,330 110,390 27,535" fill="none" stroke="#a6752b" strokeWidth="4" strokeDasharray="12 6" />
    <polyline points="3900,135 3882,502" fill="none" stroke="#b08a38" strokeWidth="4" strokeDasharray="18 9" />
    <polyline points="3882,502 4270,610" fill="none" stroke="#b08a38" strokeWidth="4" strokeDasharray="18 9" />

    <g fill="none" stroke="#d6d5d5" strokeWidth="5">
      <polyline points="2450,1740 2545,1560 2620,1590" />
      <polyline points="2500,1740 2585,1580" />
      <polyline points="3600,930 4070,1140 4060,1190" />
      <polyline points="3210,1570 3245,1595 3180,1740" />
      <polyline points="3630,1640 3660,1680 3640,1740" />
    </g>
    <Roads items={serviceRoads} casing="#d0c8c6" fill="#fff" />
    <Roads items={streets} casing="#c4c1bd" fill="#fff" />

    <g fill="none">
      {rails.map((p) => <polyline key={p} points={p} stroke="#666" strokeWidth="6" />)}
      <polyline points={rails[0]} stroke="#eee" strokeWidth="2" strokeDasharray="18 18" />
    </g>

    <path
      d="M2450 135L2820 330 3000 430 3380 625 3650 750 3725 795 3820 860 3980 955 4060 978 4270 1037V1082L3900 972 3840 960 3580 845 3310 740 3130 640 2950 550 2750 440 2175 135z"
      fill="#f7fabf"
      stroke="#8e8a25"
      strokeWidth="3"
    />
    <g fill="#cdebb0" stroke="#8e8a25" strokeWidth="3">
      <path d="M2260 135h100l400 230-10 30z" />
      <path d="M2980 487l360 173-20 37-350-187z" />
      <path d="M3380 685l250 105 150 98-200-78-220-92z" />
      <path d="M2820 430l25-30 15 7-20 35zM2880 455l12-30 55 24-20 30z" fill="#f2efe9" />
    </g>

    <g fill="none">
      <path d={loopRoad} stroke="#b17b1c" strokeWidth="32" />
      <path d={loopRoad} stroke="#fcd6a4" strokeWidth="26" />
    </g>
    <path d="M3350 640l42 20-50 100-42-20z" fill="#f7fabf" />
    <Roads items={primary} casing="#b17b1c" fill="#fcd6a4" />
    <path d="M2880 362l45 24-55 108-44-24z" fill="#f7fabf" />
    <polygon points="2510,1220 2560,1260 2325,1740 2235,1740" fill="#fcd6a4" />
    <polyline points="2530,1270 2290,1740" fill="none" stroke="#b17b1c" strokeWidth="9" />
    <polyline points="2530,1270 2290,1740" fill="none" stroke="#fff" strokeWidth="5" />
    <g fill="none">
      <polyline points="3105,135 2985,370 2870,600 2680,930 2550,1200" stroke="#fff" strokeWidth="20" />
      <polyline points="3105,135 2985,370 2870,600 2680,930 2550,1200" stroke="#9b9b9b" strokeWidth="20" strokeDasharray="18 18" />
      <polyline points="3140,135 3000,400 2880,640 2765,870" stroke="#fff" strokeWidth="20" />
      <polyline points="3140,135 3000,400 2880,640" stroke="#fcd09a" strokeWidth="20" strokeDasharray="18 18" />
      <polyline points="2880,640 2765,870" stroke="#9b9b9b" strokeWidth="20" strokeDasharray="18 18" />
    </g>
    <polygon points="2812,328 2858,346 2792,480 2746,462" fill="#aaa98f" />
    <path
      d="M2812 324l-68 136M2819 330l-68 136M2827 333l-68 136M2834 337l-68 136M2842 340l-68 136M2850 343l-68 136M2858 347l-68 136"
      fill="none"
      stroke="#444"
      strokeWidth="3.6"
    />
    <polyline points="2540,135 2880,322 3292,547 3850,710 4270,833" fill="none" stroke="#8f9a90" strokeWidth="2" />
    <rect x="3284" y="539" width="16" height="16" fill="#ddd" stroke="#666" strokeWidth="2" />
    <polyline points="2415,590 2560,665" fill="none" stroke="#999" strokeWidth="2" />

    <g fill="none" stroke="#333" strokeWidth="3">
      {gates.map(([x, y]) => <path key={`${x}-${y}`} d={`M${x - 7} ${y - 3}h14M${x - 7} ${y + 3}h14M${x - 3} ${y + 7}l6-14`} />)}
    </g>
    <g stroke="#333" strokeWidth="2.5" fill="#333">
      {oneWay.map(([x, y, a]) => (
        <path key={`${x}-${y}`} transform={`translate(${x} ${y}) rotate(${a})`} d="M-13 0h20M3-5l10 5-10 5z" />
      ))}
    </g>
    <g>
      {signals.map(([x, y]) => (
        <g key={x} fill="#fff" stroke="#444" strokeWidth="2">
          <rect x={x - 6} y={y - 16} width="12" height="32" rx="5" />
          <path d={`M${x - 5} ${y - 5}h10M${x - 5} ${y + 5}h10`} />
        </g>
      ))}
      {busStops.map(([x, y]) => (
        <g key={x}>
          <rect x={x - 10} y={y - 11} width="20" height="20" rx="3" fill="#0092da" />
          <rect x={x - 6} y={y - 7} width="12" height="8" fill="#f5e3c8" />
          <path d={`M${x - 6} ${y + 5}h3M${x + 3} ${y + 5}h3`} stroke="#fff" strokeWidth="3" />
        </g>
      ))}
      {pois.map(([c, x, y]) => <circle key={`${x}-${y}`} cx={x} cy={y} r="5" fill={c} />)}
    </g>
    <g fill="none" stroke="#734a08" strokeLinecap="round">
      <path d="M1070 606v-10l5-10h16l5 10v10h-4v-4h-18v4zM1071 582l4-3M1083 582v-6M1094 582l-4-3" fill="#734a08" strokeWidth="2" />
      <circle cx="1945" cy="202" r="4" fill="#734a08" />
      <path d="M1931 194v14l9 12M1959 194v14l-9 12" strokeWidth="4" />
      <path d="M1939 209h12v5h-12z" strokeWidth="3" />
      <path d="M483 654l7-9 7 9M478 662l-3 10h10M502 662l3 10h-12" strokeWidth="4" />
    </g>
    <path d="M3975 412v-8l5-6 5 6v8M3988 415l6 8M3999 418v-10l6-6v14z" fill="#118a2c" stroke="#118a2c" strokeWidth="3" />

    <MapText $size={30} $fill="#222" $halo>
      {streetLabels.map(([text, x, y, a]) => (
        <text key={`${x}-${y}`} transform={`translate(${x} ${y}) rotate(${a})`}>{text}</text>
      ))}
    </MapText>
    <MapText $size={27} $fill="#5a84cc">
      <text transform="translate(3682 444) rotate(81)">Neue Wuhle</text>
    </MapText>
    {placeLabels.map(([text, x, y, fill, size]) => (
      <MapText key={`${x}-${y}`} $size={size} $fill={fill} $halo><text x={x} y={y}>{text}</text></MapText>
    ))}
    <MapText $size={27} $fill="#777">
      {houseNumbers.map(([n, x, y]) => <text key={`${x}-${y}`} x={x} y={y}>{n}</text>)}
    </MapText>
    {italicLabels.map(([text, x, y, fill, size]) => (
      <MapText key={text} $size={size} $fill={fill} $italic $halo><text x={x} y={y}>{text}</text></MapText>
    ))}
    {parkingSigns.map(([fill, x, y]) => (
      <MapText key={`${x}-${y}`} $size={39} $fill={fill}><text x={x} y={y}>P</text></MapText>
    ))}

    <rect x="2134" y="928" width="25" height="25" fill="#f00" />
    <rect x="3381" y="1593" width="693" height="12" />
    <path d="M3522 1596h135v6h-135zM3798 1596h135v6h-135z" fill="#fff" />
    <MapText $size={30} $fill="#000"><text x="3722" y="1641">200 m</text></MapText>
  </MapSvg>
);

/* ---------- page ---------- */

const Field = ({ id, value, help, label }) => (
  <FieldBox>
    <FieldInput id={id} defaultValue={value} />
    {help && <HelpButton type="button" aria-label={`Hilfe zu ${label}`}>?</HelpButton>}
  </FieldBox>
);

const FormCells = ({ field, plain }) => {
  if (!field) return <><span /><span /></>;
  return (
    <>
      <FieldLabel htmlFor={field.id} $plain={plain}>{field.label}</FieldLabel>
      <Field {...field} />
    </>
  );
};

const ToolButton = ({ icon, active, label }) => (
  <Tool type="button" $active={active} aria-label={label}><Icon name={icon} /></Tool>
);

const App = () => (
  <Window>
    <GlobalStyle />
    <Gradients />
    <TitleBar>
      <svg width="16" height="16" viewBox="0 0 16 16" aria-hidden="true">
        <path d="M0 11l5-2 9 2-8 4-5-1z" fill="#aab0aa" />
        <path d="M1 7l6-2 3-4 5 2-1 6-6 4-7-2z" fill="#3e9b22" />
        <path d="M2 7l6-1 2-4 4 1-4 7z" fill="#8bd44c" />
      </svg>
      <Title>GeODin 9.0</Title>
      <WindowButton type="button" aria-label="Minimieren">
        <svg width="10" height="10" viewBox="0 0 10 10"><path d="M0 5.500h10" stroke="#000" /></svg>
      </WindowButton>
      <WindowButton type="button" aria-label="Wiederherstellen">
        <svg width="10" height="10" viewBox="0 0 10 10"><path d="M.5 2.500h7v7h-7zM2.500 2.500v-2h7v7h-2" fill="none" stroke="#000" /></svg>
      </WindowButton>
      <WindowButton type="button" aria-label="Schließen">
        <svg width="10" height="10" viewBox="0 0 10 10"><path d="M0 0l10 10M10 0L0 10" stroke="#000" /></svg>
      </WindowButton>
    </TitleBar>

    <Body>
      <Sidebar>
        <MenuRow>
          <MenuButton type="button">
            Datei
            <svg width="12" height="7" viewBox="0 0 12 7" aria-hidden="true"><path d="M1 1h10L6 6z" fill="#2a82be" stroke="#14486f" /></svg>
          </MenuButton>
          <MenuButton type="button" $right>Objekte <BackArrow /></MenuButton>
          <MenuButton type="button" $last>Methoden <BackArrow /></MenuButton>
        </MenuRow>
        <SideColumns>
          <TreeColumn>
            <TabRow role="tablist">
              <Tab type="button" role="tab" $active>Datenbanken</Tab>
              <Tab type="button" role="tab">System</Tab>
            </TabRow>
            <TreePanel>
              {tree.map((node, i) => (
                <TreeRow key={i}>
                  {Array.from({ length: node.depth }, (_, d) => <Indent key={d} $guide={d === 2 || d === 3} />)}
                  {node.leaf
                    ? <Elbow />
                    : <Toggle type="button" aria-label={node.label}><Chevron open={node.open} /></Toggle>}
                  <TreeLabel $selected={node.leaf}>
                    <Icon name={node.icon} size={15} />
                    <span>{node.label}</span>
                  </TreeLabel>
                </TreeRow>
              ))}
            </TreePanel>
          </TreeColumn>
          <MethodPanel>
            {methods.map((m) => (
              <Method type="button" key={m.lines[0]}>
                <MethodIcon name={m.icon} />
                <MethodText>{m.lines.map((line) => <span key={line}>{line}</span>)}</MethodText>
              </Method>
            ))}
          </MethodPanel>
        </SideColumns>
        <SideFooter>
          <Brand>GEODIN</Brand>
          <FooterButton type="button" aria-label="Baumansicht"><Icon name="blocksA" /></FooterButton>
          <FooterButton type="button" aria-label="Listenansicht"><Icon name="blocksB" /></FooterButton>
        </SideFooter>
      </Sidebar>

      <Main>
        <ActiveBar>
          <Pager>
            <svg width="10" height="14" viewBox="0 0 10 14"><path d="M9 1v3L5 7l4 4v3L1 7z" fill="#2a82be" stroke="#14486f" /></svg>
            <svg width="10" height="14" viewBox="0 0 10 14"><path d="M1 0v3l4 4-4 4v3l8-7z" fill="#c8c8c8" stroke="#9a9a9a" /></svg>
          </Pager>
          <ActiveTitle>Aktive Methoden:</ActiveTitle>
          <ActiveMethod>
            <MethodIcon name="formRed" />
            <CloseButton type="button" aria-label="Methode schließen"><Icon name="close" size={12} /></CloseButton>
          </ActiveMethod>
          <CornerTools>
            <Icon name="close" size={14} />
            <Icon name="help" size={14} />
            <span />
            <Icon name="info" size={14} />
          </CornerTools>
        </ActiveBar>
        <Heading>
          <span>Bodenprofil 1</span>
          <span>(Projekt KA5 - QAE5Q8)</span>
          <span>Bodenkundlicher Aufschluss nach KA5&nbsp; -&nbsp; Einheitensystem: Metrisches System</span>
        </Heading>

        <Workspace>
          <Center>
            <Toolbar>
              <Grip />
              <ToolButton icon="note" active label="Bearbeiten" />
              <ToolButton icon="save" label="Speichern" />
              <ToolButton icon="forbid" label="Abbrechen" />
              <Separator />
              <ToolButton icon="wand" label="Assistent" />
              <Separator />
              <ToolButton icon="picture" label="Bild" />
              <ToolButton icon="paint" label="Darstellung" />
              <ToolButton icon="help" label="Hilfe" />
              <Separator />
              <ToolButton icon="tray" label="Ablage" />
              <ToolButton icon="report" label="Bericht" />
              <Separator />
              <ToolButton icon="list" active label="Formular" />
              <ToolButton icon="strata" label="Schichten" />
              <ToolButton icon="curve" label="Kurve" />
            </Toolbar>

            <FormArea>
              <FormWrap>
                <TabRow role="tablist">
                  {formTabs.map((tab, i) => (
                    <Tab type="button" role="tab" key={tab} $active={i === 0}>{tab}</Tab>
                  ))}
                </TabRow>
                <FormPanel>
                  <FormGrid>
                    {leftFields.map((field, i) => (
                      <React.Fragment key={field.id}>
                        <FormCells field={field} />
                        <FormCells field={rightFields[i]} />
                      </React.Fragment>
                    ))}
                    <FieldLabel htmlFor="aufnahme">Datum der Aufnahme (4) *</FieldLabel>
                    <DatePair>
                      <Field id="aufnahme" value="24.07.2019" />
                      <FieldLabel htmlFor="erfassung">Erfassungsdatum</FieldLabel>
                      <Field id="erfassung" value="24.07.2019" />
                    </DatePair>
                    <FormCells plain field={{ id: 'stand', label: 'Bearbeitungsstand', value: 'Gg', help: true }} />
                  </FormGrid>
                </FormPanel>
              </FormWrap>
            </FormArea>

            <MapToolbar>
              <ToolGroup $small>
                <DotGrip />
                <MapTool type="button" aria-label="Einstellungen"><Icon name="wrench" /></MapTool>
              </ToolGroup>
              <ToolGroup $small>
                <DotGrip />
                <MapTool type="button" aria-label="Messen"><Icon name="ruler" /></MapTool>
                <CaretButton type="button" aria-label="Messoptionen"><Caret /></CaretButton>
              </ToolGroup>
              <ToolGroup>
                <DotGrip />
                <MapTool type="button" aria-label="Gesamtansicht"><Icon name="globe" /></MapTool>
                <MapTool type="button" aria-label="Zoom"><Icon name="mapZoom" size={14} /></MapTool>
                <MapTool type="button" aria-label="Verschieben"><Icon name="hand" /></MapTool>
                <MapTool type="button" aria-label="Zeichnen"><Icon name="pencil" size={15} /></MapTool>
                <MapTool type="button" aria-label="Attribute"><Icon name="note" size={14} /></MapTool>
                <MapTool type="button" aria-label="Löschen"><Icon name="cross" size={14} /></MapTool>
                <MapTool type="button" aria-label="Symbol"><Icon name="dot" /></MapTool>
                <CaretButton type="button" aria-label="Symbol wählen"><Caret /></CaretButton>
              </ToolGroup>
            </MapToolbar>
            <MapView><CityMap /></MapView>
            <Coordinates>Koordinaten: X: 1508424,1877, Y: 6902607,1241</Coordinates>
          </Center>

          <Rail>
            <RailTools>
              <RailGrip />
              <ToolButton icon="dataForm" label="Datenmaske" />
              <ToolButton icon="dataStar" label="Neue Maske" />
              <ToolButton icon="dataOk" label="Maske prüfen" />
              <ToolButton icon="pin" active label="Karte" />
            </RailTools>
          </Rail>
        </Workspace>
        <StatusBar>
          <StatusCell />
          <svg width="10" height="10" viewBox="0 0 10 10" aria-hidden="true">
            <path d="M7 0h2v2H7zM4 3h2v2H4zM7 3h2v2H7zM1 6h2v2H1zM4 6h2v2H4zM7 6h2v2H7z" fill="#bdbdbd" />
          </svg>
        </StatusBar>
      </Main>
    </Body>
  </Window>
);

export default App;

const HiddenSvg = styled.svg`
  position: absolute;
`;

const Window = styled.div`
  display: flex;
  flex-direction: column;
  height: 100vh;
  min-height: 700px;
  overflow: hidden;
`;

const TitleBar = styled.header`
  display: flex;
  align-items: center;
  height: 24px;
  padding-left: 2px;
  border-bottom: 1px solid #999;
  flex: none;
`;

const Title = styled.h1`
  flex: 1;
  margin: 0 0 0 5px;
  font: 400 12px/16px 'Open Sans', 'Noto Sans', sans-serif;
`;

const WindowButton = styled.button`
  display: flex;
  align-items: center;
  justify-content: center;
  width: 46px;
  height: 20px;
`;

const Body = styled.div`
  display: flex;
  flex: 1;
  min-height: 0;
`;

const Sidebar = styled.aside`
  display: flex;
  flex-direction: column;
  width: 477px;
  flex: none;
`;

const MenuRow = styled.div`
  display: flex;
  height: 35px;
  padding: 0 5px 0 4px;
  flex: none;
`;

const MenuButton = styled.button`
  display: flex;
  align-items: center;
  align-self: flex-start;
  gap: 7px;
  height: 19px;
  font-size: 12px;
  margin-left: ${(p) => (p.$right ? 'auto' : p.$last ? '86px' : '0')};
`;

const SideColumns = styled.div`
  display: flex;
  gap: 5px;
  flex: 1;
  min-height: 0;
`;

const TreeColumn = styled.div`
  display: flex;
  flex-direction: column;
  width: 313px;
`;

const TabRow = styled.div`
  display: flex;
  align-items: flex-end;
  height: 20px;
  flex: none;
`;

const Tab = styled.button`
  position: relative;
  height: ${(p) => (p.$active ? '21px' : '18px')};
  margin-bottom: ${(p) => (p.$active ? '-1px' : '0')};
  padding: 0 ${(p) => (p.$active ? '6px' : '4px')};
  border: 1px solid #d9d9d9;
  border-width: ${(p) => (p.$active ? '1px 1px 0' : '1px 1px 0 0')};
  background: ${(p) => (p.$active ? '#fff' : '#f0f0f0')};
  white-space: nowrap;
`;

const TreePanel = styled.ul`
  flex: 1;
  margin: 0;
  padding: 3px 0 0 5px;
  list-style: none;
  border: 1px solid #d9d9d9;
  border-left: 0;
`;

const TreeRow = styled.li`
  display: flex;
  align-items: center;
  height: 17px;
`;

const Indent = styled.span`
  display: flex;
  justify-content: center;
  width: 19px;
  height: 17px;
  flex: none;

  &::after {
    content: '';
    border-left: ${(p) => (p.$guide ? '1px dotted #777' : '0')};
  }
`;

const Toggle = styled.button`
  display: flex;
  align-items: center;
  justify-content: center;
  width: 19px;
  height: 17px;
  flex: none;
`;

const Elbow = styled.span`
  align-self: flex-start;
  width: 9px;
  height: 9px;
  margin-left: 9px;
  border: 1px dotted #777;
  border-width: 0 0 1px 1px;
  flex: none;
`;

const TreeLabel = styled.span`
  display: flex;
  align-items: center;
  gap: 5px;
  height: 17px;
  padding: 0 4px 0 2px;
  background: ${(p) => (p.$selected ? '#b8b8b8' : 'transparent')};
  white-space: nowrap;
`;

const MethodPanel = styled.div`
  width: 155px;
  margin-top: 20px;
  padding-top: 2px;
  border: 1px solid #828790;
`;

const Method = styled.button`
  display: flex;
  flex-direction: column;
  align-items: center;
  width: 132px;
  height: 91px;
  text-align: center;
`;

const MethodText = styled.span`
  display: flex;
  flex-direction: column;
  margin-top: 4px;
  white-space: nowrap;
`;

const SideFooter = styled.footer`
  display: flex;
  align-items: center;
  gap: 9px;
  height: 30px;
  padding: 0 3px 2px;
  flex: none;
`;

const Brand = styled.strong`
  padding: 0 9px;
  background: #07384e;
  color: #fff;
  font: 700 11px/22px 'Open Sans', sans-serif;
`;

const FooterButton = styled.button`
  display: flex;
`;

const Main = styled.main`
  display: flex;
  flex-direction: column;
  flex: 1;
  min-width: 0;
  border-left: 1px solid #999;
`;

const ActiveBar = styled.section`
  display: flex;
  height: 56px;
  padding-left: 11px;
  border-bottom: 1px solid #999;
  flex: none;
`;

const Pager = styled.div`
  display: flex;
  flex-direction: column;
  gap: 11px;
  padding-top: 6px;
`;

const ActiveTitle = styled.h2`
  margin: 0 17px 0 10px;
  color: #b3b3b3;
  font-size: 21px;
  font-weight: 400;
  line-height: 52px;
  white-space: nowrap;
`;

const ActiveMethod = styled.div`
  display: flex;
  justify-content: space-between;
  width: 76px;
  height: 52px;
  margin-top: 1px;
  padding: 2px 7px 0 3px;
  border: 1px solid #99c9f5;
`;

const CloseButton = styled.button`
  display: flex;
  align-self: flex-start;
  padding-top: 2px;
`;

const CornerTools = styled.div`
  display: grid;
  grid-template-columns: 14px 14px;
  align-content: start;
  align-items: center;
  gap: 12px 14px;
  margin-left: auto;
  padding: 6px 5px 0 0;
`;

const Heading = styled.h3`
  display: flex;
  gap: 16px;
  margin: 2px 0 0 2px;
  padding-left: 5px;
  height: 23px;
  background: #e3e3e3;
  border-bottom: 1px solid #999;
  font-size: 13px;
  font-weight: 400;
  line-height: 22px;
  white-space: nowrap;
  flex: none;
`;

const Workspace = styled.div`
  display: flex;
  flex: 1;
  min-height: 0;
  background: #efefef;
`;

const Center = styled.div`
  display: flex;
  flex-direction: column;
  flex: 1;
  min-width: 0;
`;

const Toolbar = styled.div`
  display: flex;
  align-self: flex-start;
  align-items: center;
  height: 28px;
  margin-left: 2px;
  padding-right: 2px;
  border: 1px solid #999;
  border-width: 0 1px 1px 0;
  flex: none;
`;

const Grip = styled.span`
  width: 4px;
  height: 22px;
  margin: 0 6px 0 4px;
  border: 1px solid #aaa;
  border-width: 0 1px;
`;

const Tool = styled.button`
  display: flex;
  align-items: center;
  justify-content: center;
  width: 24px;
  height: 24px;
  border: 1px solid ${(p) => (p.$active ? '#90c8f6' : 'transparent')};
  background: ${(p) => (p.$active ? '#c2dff5' : 'transparent')};
`;

const Separator = styled.span`
  width: 1px;
  height: 25px;
  margin: 0 3px 0 2px;
  background: #999;
`;

const FormArea = styled.section`
  display: flex;
  justify-content: center;
  padding: 20px 0 28px;
  border-bottom: 1px solid #999;
  flex: none;
`;

const FormWrap = styled.div`
  display: flex;
  flex-direction: column;
`;

const FormPanel = styled.div`
  padding: 10px;
  background: #fff;
  border: 1px solid #d9d9d9;
`;

const FormGrid = styled.form`
  display: grid;
  grid-template-columns: 138px 294px 148px 294px;
  grid-auto-rows: 21px;
  gap: 9px 13px;
  padding: 10px 12px 14px 11px;
  border: 1px solid #999;

  & > :nth-child(4n + 3) {
    margin-left: 10px;
  }
`;

const FieldLabel = styled.label`
  height: 20px;
  padding: 3px 0 0 3px;
  border: 1px solid #999;
  border-width: 1px 0 0 1px;
  color: ${(p) => (p.$plain ? '#000' : '#0000f0')};
  white-space: nowrap;
`;

const FieldBox = styled.div`
  display: flex;
  height: 21px;
  padding: 1px;
  border: 1px solid #777;
  background: #fff;
`;

const FieldInput = styled.input`
  flex: 1;
  width: 0;
  padding: 0 1px;
  border: 0;
  outline: 0;
  background: transparent;
`;

const HelpButton = styled.button`
  width: 14px;
  border: 1px solid #adadad;
  background: #e1e1e1;
  color: #2d4f7a;
  font-weight: 700;
`;

const DatePair = styled.div`
  display: grid;
  grid-template-columns: 72px 120px 72px;
  column-gap: 15px;
`;

const MapToolbar = styled.div`
  display: flex;
  height: 29px;
  margin: 2px 1px 2px 1px;
  border: 1px solid #999;
  flex: none;
`;

const ToolGroup = styled.div`
  display: flex;
  align-items: center;
  width: ${(p) => (p.$small ? '73px' : '213px')};
  border-right: 1px solid #999;
`;

const DotGrip = styled.span`
  height: 18px;
  margin: 0 4px 0 4px;
  border-left: 2px dotted #aaa;
`;

const MapTool = styled.button`
  display: flex;
  align-items: center;
  justify-content: center;
  width: 25px;
  height: 25px;
`;

const CaretButton = styled.button`
  display: flex;
  align-items: center;
  justify-content: center;
  width: 20px;
  height: 25px;
`;

const MapView = styled.div`
  flex: 1;
  min-height: 0;
  margin-left: 1px;
  overflow: hidden;
`;

const MapSvg = styled.svg`
  width: 100%;
  height: 100%;
`;

const MapText = styled.g`
  fill: ${(p) => p.$fill};
  font-family: 'Noto Sans', 'Open Sans', sans-serif;
  font-size: ${(p) => p.$size}px;
  font-style: ${(p) => (p.$italic ? 'italic' : 'normal')};
  text-anchor: middle;
  paint-order: stroke;
  stroke: ${(p) => (p.$halo ? 'rgba(255, 255, 255, 0.6)' : 'none')};
  stroke-width: 5px;
`;

const Coordinates = styled.output`
  height: 19px;
  padding-left: 3px;
  border: 1px solid #d5d5d5;
  border-width: 1px 1px 0 0;
  line-height: 19px;
  flex: none;
`;

const Rail = styled.div`
  width: 28px;
  padding: 28px 0 0 1px;
`;

const RailTools = styled.div`
  display: flex;
  flex-direction: column;
  align-items: center;
  padding-bottom: 2px;
  border: 1px solid #999;
  border-width: 0 0 1px;
`;

const RailGrip = styled.span`
  width: 22px;
  height: 4px;
  margin: 5px 0;
  border: 1px solid #aaa;
  border-width: 1px 0;
`;

const StatusBar = styled.footer`
  display: flex;
  align-items: flex-end;
  justify-content: space-between;
  height: 31px;
  background: #efefef;
  border-top: 1px solid #d0d0d0;
  flex: none;
`;

const StatusCell = styled.span`
  width: 81px;
  height: 100%;
  border-right: 1px solid #d0d0d0;
`;
